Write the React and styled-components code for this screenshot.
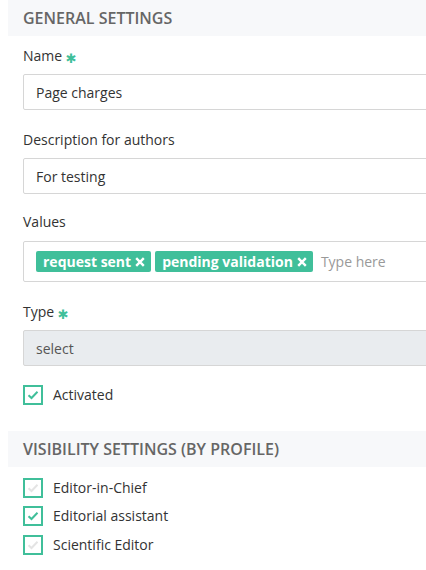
import styled, { createGlobalStyle } from "styled-components";

const GlobalStyle = createGlobalStyle`
  html, body {
    margin: 0;
    padding: 0;
    background: #fff;
    overflow: hidden;
  }
  body {
    font-family: "Open Sans", "Liberation Sans", sans-serif;
    color: #333;
  }
`;

const teal = "#40bf9a";

const CheckIcon = ({ color }) => (
  <svg width="12" height="10" viewBox="0 0 12 10">
    <path d="M1.5 5.2 L4.5 8 L10.5 1.8" fill="none" stroke={color} strokeWidth="2" />
  </svg>
);

const CrossIcon = () => (
  <svg width="10" height="10" viewBox="0 0 10 10">
    <path d="M1.2 1.2 L8.8 8.8 M8.8 1.2 L1.2 8.8" stroke="#fff" strokeWidth="2.4" />
  </svg>
);

const App = () => {
  return (
    <Page>
      <GlobalStyle />
      <SectionTitle>General settings</SectionTitle>
      <Body>
        <Field>
          <Label>
            Name <Star>✱</Star>
          </Label>
          <Input>Page charges</Input>
        </Field>
        <Field $top={20}>
          <Label>Description for authors</Label>
          <Input>For testing</Input>
        </Field>
        <Field $top={18}>
          <Label>Values</Label>
          <TagBox>
            <Tag>
              request sent <CrossIcon />
            </Tag>
            <Tag>
              pending validation <CrossIcon />
            </Tag>
            <Placeholder>Type here</Placeholder>
          </TagBox>
        </Field>
        <Field $top={20}>
          <Label>
            Type <Star>✱</Star>
          </Label>
          <Input $disabled>select</Input>
        </Field>
        <CheckRow $top={19}>
          <Box>
            <CheckIcon color={teal} />
          </Box>
          Activated
        </CheckRow>
      </Body>
      <SectionTitle $top={26}>Visibility settings (by profile)</SectionTitle>
      <Body $top={11}>
        <CheckRow>
          <Box>
            <CheckIcon color="#e4e4e4" />
          </Box>
          Editor-in-Chief
        </CheckRow>
        <CheckRow $top={8}>
          <Box>
            <CheckIcon color={teal} />
          </Box>
          Editorial assistant
        </CheckRow>
        <CheckRow $top={9}>
          <Box>
            <CheckIcon color="#e4e4e4" />
          </Box>
          Scientific Editor
        </CheckRow>
      </Body>
    </Page>
  );
};
export default App;

const Page = styled.div`
  width: 560px;
  padding-left: 8px;
`;

const SectionTitle = styled.h2`
  margin: ${({ $top }) => $top || 0}px 0 0 0;
  height: 36px;
  background: #f7f8fa;
  padding: 0 15px;
  display: flex;
  align-items: center;
  font-size: 16px;
  font-weight: 600;
  color: #666;
  text-transform: uppercase;
`;

const Body = styled.div`
  padding: ${({ $top }) => $top ?? 0}px 0 0 15px;
  display: flex;
  flex-direction: column;
`;

const Field = styled.div`
  display: flex;
  flex-direction: column;
  gap: 8px;
  margin-top: ${({ $top }) => $top || 10}px;
`;

const Label = styled.div`
  font-size: 14px;
  line-height: 20px;
  height: 20px;
  color: #333;
`;

const Star = styled.span`
  color: ${teal};
  font-family: "DejaVu Sans", sans-serif;
  font-size: 13px;
  line-height: 1;
  position: relative;
  top: 2px;
`;

const Input = styled.div`
  box-sizing: border-box;
  height: 36px;
  border: 1px solid #d6d6d6;
  border-radius: 2px;
  padding: 0 12px;
  display: flex;
  align-items: center;
  font-size: 14px;
  color: ${({ $disabled }) => ($disabled ? "#555" : "#333")};
  background: ${({ $disabled }) => ($disabled ? "#e9ecef" : "#fff")};
`;

const TagBox = styled(Input)`
  height: 41px;
  gap: 4px;
  margin-top: 1px;
`;

const Tag = styled.span`
  height: 21px;
  padding: 0 6px 0 7px;
  background: ${teal};
  border-radius: 2px;
  color: #fff;
  font-size: 14px;
  font-weight: 700;
  line-height: 21px;
  white-space: nowrap;
  display: flex;
  align-items: center;
  gap: 4px;
`;

const Placeholder = styled.span`
  margin-left: 4px;
  color: #999;
  font-size: 14px;
`;

const CheckRow = styled.label`
  display: flex;
  align-items: center;
  gap: 10px;
  margin-top: ${({ $top }) => $top || 0}px;
  font-size: 14px;
  line-height: 20px;
  color: #333;
`;

const Box = styled.span`
  box-sizing: border-box;
  width: 20px;
  height: 20px;
  border: 2px solid ${teal};
  display: flex;
  align-items: center;
  justify-content: center;
`;
